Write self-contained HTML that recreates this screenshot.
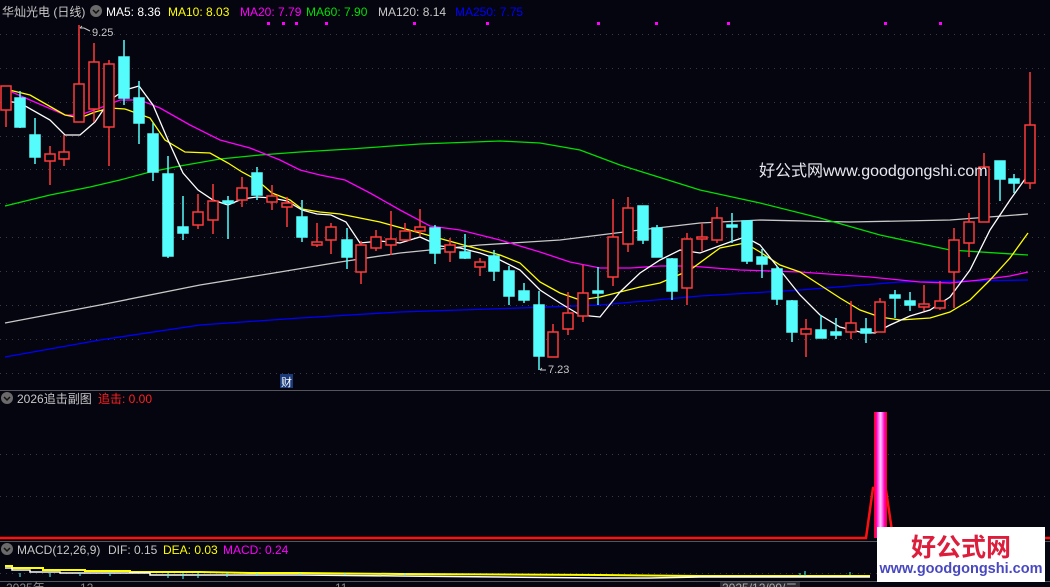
<!DOCTYPE html>
<html><head><meta charset="utf-8"><style>
html,body{margin:0;padding:0;background:#05050f;width:1050px;height:587px;overflow:hidden}
svg{display:block}
text{font-family:"Liberation Sans","Noto Sans CJK SC",sans-serif}
</style></head><body>
<svg width="1050" height="587" viewBox="0 0 1050 587" xmlns="http://www.w3.org/2000/svg">
<defs>
<linearGradient id="bar" x1="0" x2="1" y1="0" y2="0">
<stop offset="0" stop-color="#ff0000"/><stop offset="0.2" stop-color="#ff00cc"/><stop offset="0.5" stop-color="#ffd0ff"/><stop offset="0.8" stop-color="#ff00cc"/><stop offset="1" stop-color="#ff0000"/>
</linearGradient>
</defs>
<rect width="1050" height="587" fill="#05050f"/>
<g stroke="#3a3a44" stroke-dasharray="1 5" stroke-width="1">
<line x1="0" x2="1050" y1="34.5" y2="34.5"/><line x1="0" x2="1050" y1="68.5" y2="68.5"/><line x1="0" x2="1050" y1="102.5" y2="102.5"/><line x1="0" x2="1050" y1="136.5" y2="136.5"/><line x1="0" x2="1050" y1="169.5" y2="169.5"/><line x1="0" x2="1050" y1="203.5" y2="203.5"/><line x1="0" x2="1050" y1="237.5" y2="237.5"/><line x1="0" x2="1050" y1="271.5" y2="271.5"/><line x1="0" x2="1050" y1="305.5" y2="305.5"/><line x1="0" x2="1050" y1="339.5" y2="339.5"/><line x1="0" x2="1050" y1="373.5" y2="373.5"/>
<line x1="0" x2="1050" y1="454.5" y2="454.5"/><line x1="0" x2="1050" y1="496.5" y2="496.5"/><line x1="0" x2="1050" y1="573.5" y2="573.5"/>
</g>
<line x1="0" x2="1050" y1="390.5" y2="390.5" stroke="#55555c"/>
<line x1="0" x2="1050" y1="541.5" y2="541.5" stroke="#55555c"/>
<line x1="0" x2="1050" y1="581.5" y2="581.5" stroke="#55555c"/>

<g fill="none" stroke-width="1.3">
<polyline stroke="#0000ff" points="5,357 100,340 200,325 300,318 400,312 520,308 600,305 700,296 800,290 900,282 1028,280"/>
<polyline stroke="#c8c8c8" points="5,323 100,305 200,285 280,272 340,262 400,253 480,245 560,240 640,230 700,223 760,220 850,222 950,220 1028,214"/>
<polyline stroke="#00e000" points="5,206 50,195 90,187 120,180 150,172 180,166 220,159 260,155 300,152 350,149 420,144 500,141 540,143 580,150 620,165 700,190 760,203 820,218 880,235 950,250 1028,255"/>
<polyline stroke="#ff00ff" points="5,89 30,100 65,115 80,115 100,108 120,100 140,100 160,108 190,125 220,140 250,148 280,160 300,170 320,175 345,180 370,193 400,210 430,226 460,230 500,240 540,252 570,262 600,268 630,268 660,266 690,266 740,270 800,272 870,277 920,282 950,283 980,280 1010,276 1028,272"/>
<polyline stroke="#ffff00" points="5,89 30,95 65,115 80,118 95,112 110,108 125,109 150,118 165,140 185,152 210,153 228,163 242,172 257,180 272,193 290,200 302,209 320,212 340,214 380,222 420,233 460,244 500,255 520,263 540,282 560,293 580,300 600,297 620,292 640,287 660,283 690,270 720,248 745,243 760,252 780,265 800,272 820,285 840,298 860,310 880,317 900,320 930,318 950,312 970,300 990,280 1010,258 1028,233"/>
<polyline stroke="#ffffff" points="5,101 20,103 50,120 65,135 80,135 95,122 110,100 125,90 139,86 153,105 168,140 183,173 198,190 213,200 228,205 242,199 257,197 272,198 287,201 302,210 317,214 331,215 346,222 360,243 380,241 400,243 420,237 440,246 460,248 480,253 500,260 520,270 540,290 560,303 580,315 600,317 620,292 640,273 660,260 680,250 700,253 730,242 745,237 760,245 780,270 800,295 820,315 840,327 860,332 875,333 890,325 910,316 930,310 950,297 970,270 990,230 1010,200 1028,175"/>
</g>

<g stroke-width="1.5">
<g stroke="#ff3b3b" fill="#05050f">
<line x1="6" x2="6" y1="86" y2="127"/><rect x="1" y="86" width="10" height="24"/>
<line x1="50" x2="50" y1="146" y2="185"/><rect x="45" y="154" width="10" height="7"/>
<line x1="64" x2="64" y1="135" y2="166"/><rect x="59" y="152" width="10" height="7"/>
<line x1="79" x2="79" y1="25" y2="122"/><rect x="74" y="84" width="10" height="38"/>
<line x1="94" x2="94" y1="43" y2="122"/><rect x="89" y="62" width="10" height="47"/>
<line x1="109" x2="109" y1="60" y2="166"/><rect x="104" y="64" width="10" height="63"/>
<line x1="198" x2="198" y1="194" y2="229"/><rect x="193" y="212" width="10" height="13"/>
<line x1="213" x2="213" y1="184" y2="234"/><rect x="208" y="201" width="10" height="19"/>
<line x1="242" x2="242" y1="177" y2="207"/><rect x="237" y="188" width="10" height="12"/>
<line x1="272" x2="272" y1="185" y2="210"/><rect x="267" y="196" width="10" height="6"/>
<line x1="287" x2="287" y1="197" y2="227"/><rect x="282" y="203" width="10" height="4"/>
<line x1="317" x2="317" y1="223" y2="247"/><rect x="312" y="242" width="10" height="3"/>
<line x1="331" x2="331" y1="223" y2="254"/><rect x="326" y="227" width="10" height="13"/>
<line x1="361" x2="361" y1="241" y2="284"/><rect x="356" y="245" width="10" height="27"/>
<line x1="376" x2="376" y1="230" y2="251"/><rect x="371" y="237" width="10" height="11"/>
<line x1="391" x2="391" y1="211" y2="255"/><rect x="386" y="239" width="10" height="6"/>
<line x1="405" x2="405" y1="223" y2="241"/><rect x="400" y="231" width="10" height="9"/>
<line x1="420" x2="420" y1="209" y2="236"/><rect x="415" y="227" width="10" height="4"/>
<line x1="450" x2="450" y1="238" y2="262"/><rect x="445" y="245" width="10" height="7"/>
<line x1="480" x2="480" y1="258" y2="276"/><rect x="475" y="262" width="10" height="5"/>
<line x1="553" x2="553" y1="324" y2="357"/><rect x="548" y="332" width="10" height="25"/>
<line x1="568" x2="568" y1="292" y2="335"/><rect x="563" y="313" width="10" height="16"/>
<line x1="583" x2="583" y1="265" y2="322"/><rect x="578" y="293" width="10" height="23"/>
<line x1="613" x2="613" y1="199" y2="286"/><rect x="608" y="237" width="10" height="40"/>
<line x1="628" x2="628" y1="197" y2="252"/><rect x="623" y="208" width="10" height="36"/>
<line x1="687" x2="687" y1="233" y2="305"/><rect x="682" y="239" width="10" height="49"/>
<line x1="702" x2="702" y1="223" y2="251"/><rect x="697" y="237" width="10" height="2"/>
<line x1="717" x2="717" y1="207" y2="243"/><rect x="712" y="218" width="10" height="22"/>
<line x1="806" x2="806" y1="319" y2="357"/><rect x="801" y="329" width="10" height="5"/>
<line x1="851" x2="851" y1="301" y2="339"/><rect x="846" y="323" width="10" height="9"/>
<line x1="880" x2="880" y1="298" y2="332"/><rect x="875" y="302" width="10" height="30"/>
<line x1="924" x2="924" y1="285" y2="311"/><rect x="919" y="304" width="10" height="3"/>
<line x1="940" x2="940" y1="281" y2="310"/><rect x="935" y="301" width="10" height="7"/>
<line x1="954" x2="954" y1="228" y2="308"/><rect x="949" y="240" width="10" height="32"/>
<line x1="969" x2="969" y1="213" y2="257"/><rect x="964" y="222" width="10" height="21"/>
<line x1="984" x2="984" y1="153" y2="222"/><rect x="979" y="167" width="10" height="55"/>
<line x1="1030" x2="1030" y1="72" y2="189"/><rect x="1025" y="125" width="10" height="58"/>
</g>
<g stroke="#54fcfc" fill="#54fcfc">
<line x1="20" x2="20" y1="91" y2="128"/><rect x="15" y="98" width="10" height="29"/>
<line x1="35" x2="35" y1="118" y2="164"/><rect x="30" y="135" width="10" height="22"/>
<line x1="124" x2="124" y1="40" y2="105"/><rect x="119" y="57" width="10" height="41"/>
<line x1="139" x2="139" y1="81" y2="144"/><rect x="134" y="98" width="10" height="25"/>
<line x1="153" x2="153" y1="123" y2="181"/><rect x="148" y="134" width="10" height="38"/>
<line x1="168" x2="168" y1="156" y2="258"/><rect x="163" y="174" width="10" height="82"/>
<line x1="183" x2="183" y1="196" y2="240"/><rect x="178" y="227" width="10" height="6"/>
<line x1="228" x2="228" y1="196" y2="239"/><rect x="223" y="201" width="10" height="2"/>
<line x1="257" x2="257" y1="167" y2="200"/><rect x="252" y="173" width="10" height="22"/>
<line x1="302" x2="302" y1="200" y2="242"/><rect x="297" y="217" width="10" height="20"/>
<line x1="347" x2="347" y1="228" y2="269"/><rect x="342" y="240" width="10" height="17"/>
<line x1="435" x2="435" y1="225" y2="264"/><rect x="430" y="228" width="10" height="25"/>
<line x1="465" x2="465" y1="234" y2="259"/><rect x="460" y="252" width="10" height="6"/>
<line x1="494" x2="494" y1="250" y2="281"/><rect x="489" y="256" width="10" height="15"/>
<line x1="509" x2="509" y1="266" y2="305"/><rect x="504" y="271" width="10" height="25"/>
<line x1="524" x2="524" y1="283" y2="303"/><rect x="519" y="291" width="10" height="9"/>
<line x1="539" x2="539" y1="291" y2="370"/><rect x="534" y="305" width="10" height="51"/>
<line x1="598" x2="598" y1="267" y2="305"/><rect x="593" y="291" width="10" height="2"/>
<line x1="643" x2="643" y1="206" y2="244"/><rect x="638" y="206" width="10" height="34"/>
<line x1="657" x2="657" y1="225" y2="257"/><rect x="652" y="228" width="10" height="29"/>
<line x1="672" x2="672" y1="258" y2="300"/><rect x="667" y="259" width="10" height="32"/>
<line x1="732" x2="732" y1="213" y2="243"/><rect x="727" y="225" width="10" height="2"/>
<line x1="747" x2="747" y1="221" y2="264"/><rect x="742" y="221" width="10" height="40"/>
<line x1="762" x2="762" y1="249" y2="278"/><rect x="757" y="257" width="10" height="7"/>
<line x1="777" x2="777" y1="266" y2="305"/><rect x="772" y="269" width="10" height="30"/>
<line x1="792" x2="792" y1="300" y2="342"/><rect x="787" y="301" width="10" height="31"/>
<line x1="821" x2="821" y1="315" y2="338"/><rect x="816" y="330" width="10" height="8"/>
<line x1="836" x2="836" y1="318" y2="339"/><rect x="831" y="332" width="10" height="3"/>
<line x1="866" x2="866" y1="318" y2="343"/><rect x="861" y="329" width="10" height="4"/>
<line x1="895" x2="895" y1="290" y2="318"/><rect x="890" y="295" width="10" height="3"/>
<line x1="910" x2="910" y1="292" y2="311"/><rect x="905" y="301" width="10" height="4"/>
<line x1="1000" x2="1000" y1="161" y2="201"/><rect x="995" y="161" width="10" height="18"/>
<line x1="1014" x2="1014" y1="174" y2="193"/><rect x="1009" y="179" width="10" height="4"/>
</g>
</g>

<g fill="#ff00ff">
<rect x="267" y="22" width="3" height="3"/><rect x="282" y="22" width="3" height="3"/><rect x="295" y="22" width="3" height="3"/><rect x="325" y="22" width="3" height="3"/><rect x="413" y="22" width="3" height="3"/><rect x="486" y="22" width="3" height="3"/><rect x="597" y="22" width="3" height="3"/><rect x="655" y="22" width="3" height="3"/><rect x="727" y="22" width="3" height="3"/><rect x="884" y="22" width="3" height="3"/><rect x="939" y="22" width="3" height="3"/>
</g>

<text x="2" y="16" font-size="12" fill="#c8c8c8">华灿光电 (日线)</text>
<circle cx="96" cy="11" r="6" fill="#6a6a6a"/><path d="M93 10l3 3 3-3" stroke="#111" stroke-width="1.5" fill="none"/>
<text y="16" font-size="12"><tspan x="106" fill="#ffffff">MA5: 8.36</tspan><tspan x="168" fill="#ffff00">MA10: 8.03</tspan><tspan x="240" fill="#ff00ff">MA20: 7.79</tspan><tspan x="306" fill="#00e000">MA60: 7.90</tspan><tspan x="378" fill="#c8c8c8">MA120: 8.14</tspan><tspan x="455" fill="#0000ff">MA250: 7.75</tspan></text>

<path d="M80 28 L84 28 M80 28 L82 26 M84 28 L90 31" stroke="#c8c8c8" fill="none"/>
<text x="92" y="36" font-size="11" fill="#c8c8c8">9.25</text>
<path d="M540 370 L546 370 M540 370 L542 368" stroke="#c8c8c8" fill="none"/>
<text x="548" y="373" font-size="11" fill="#c8c8c8">7.23</text>
<rect x="280" y="374" width="13" height="14" fill="#1a3a7a"/>
<text x="281" y="386" font-size="11" fill="#ffffff">财</text>

<text x="759" y="176" font-size="16" fill="#e8e8f0">好公式网www.goodgongshi.com</text>

<circle cx="7" cy="398" r="6" fill="#6a6a6a"/><path d="M4 397l3 3 3-3" stroke="#111" stroke-width="1.5" fill="none"/>
<text x="17" y="403" font-size="12" fill="#c8c8c8">2026追击副图</text>
<text x="98" y="403" font-size="12" fill="#ff2020">追击: 0.00</text>
<polyline points="0,538 866,538 873,488 877,488" fill="none" stroke="#ff1010" stroke-width="2.5"/>
<polyline points="886,490 893,538 1050,538" fill="none" stroke="#ff1010" stroke-width="2.5"/>
<rect x="874" y="412" width="13" height="126" fill="url(#bar)"/>

<circle cx="7" cy="549" r="6" fill="#6a6a6a"/><path d="M4 548l3 3 3-3" stroke="#111" stroke-width="1.5" fill="none"/>
<text y="554" font-size="12"><tspan x="17" fill="#c8c8c8">MACD(12,26,9)</tspan><tspan x="108" fill="#c8c8c8">DIF: 0.15</tspan><tspan x="163" fill="#ffff00">DEA: 0.03</tspan><tspan x="223" fill="#ff00ff">MACD: 0.24</tspan></text>
<polyline points="5,566 12,566 12,568 43,568 43,570 85,570 85,571 130,571 130,572 200,572 250,573 300,573 400,574 600,575 700,576 870,576" fill="none" stroke="#ffff00" stroke-width="2"/>
<polyline points="5,568 12,568 12,570 30,570 30,572 60,572 60,573 150,573 150,575 300,575 400,576 500,577 600,578 650,578 700,577 870,577" fill="none" stroke="#ffffff" stroke-width="1.5"/>
<g stroke="#54fcfc" stroke-width="1">
<line x1="20" x2="20" y1="573" y2="577"/><line x1="50" x2="50" y1="573" y2="577"/><line x1="80" x2="80" y1="573" y2="576"/><line x1="110" x2="110" y1="573" y2="576"/><line x1="168" x2="168" y1="573" y2="578"/><line x1="183" x2="183" y1="573" y2="579"/><line x1="198" x2="198" y1="573" y2="578"/><line x1="227" x2="227" y1="573" y2="577"/><line x1="257" x2="257" y1="573" y2="576"/><line x1="300" x2="300" y1="573" y2="575"/><line x1="345" x2="345" y1="573" y2="575"/><line x1="405" x2="405" y1="573" y2="575"/><line x1="800" x2="800" y1="573" y2="576"/><line x1="805" x2="805" y1="571" y2="576"/><line x1="850" x2="850" y1="572" y2="575"/>
</g>
<text x="6" y="592" font-size="12" fill="#888">2025年</text>
<text x="80" y="592" font-size="12" fill="#888">12</text>
<text x="335" y="592" font-size="12" fill="#888">11</text>
<rect x="720" y="582" width="80" height="10" fill="#2a2a32"/>
<text x="722" y="592" font-size="12" fill="#aaa">2025/12/09/二</text>

<rect x="877" y="527" width="168" height="55" fill="#ffffff"/>
<text x="961" y="556" font-size="25" font-weight="bold" fill="#dc1e3c" text-anchor="middle">好公式网</text>
<text x="961" y="573" font-size="14.5" font-weight="bold" fill="#4848c0" text-anchor="middle">www.goodgongshi.com</text>
</svg>
</body></html>
